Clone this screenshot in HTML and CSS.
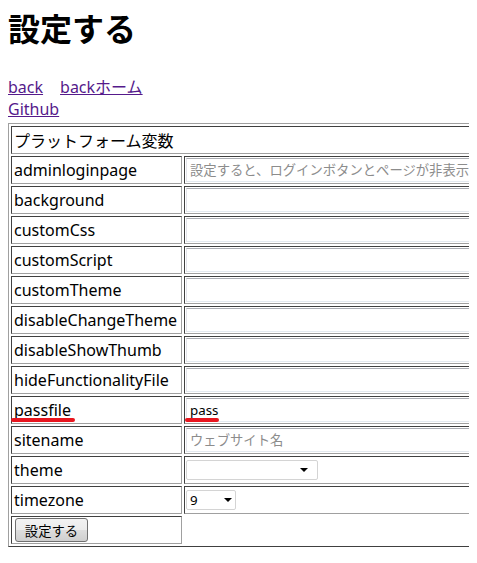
FILE: index.html
```html
<!DOCTYPE html>
<html lang="ja">
<head>
<meta charset="utf-8">
<title>設定する</title>
<link rel="stylesheet" href="styles.css">
</head>
<body>
<h1 class="title">設定する</h1>
<div class="nav">
  <div class="nav-row"><a class="link" href="#">back</a><a class="link link-home" href="#">backホーム</a></div>
  <div class="nav-row"><a class="link" href="#">Github</a></div>
</div>
<div class="table-clip">
  <div class="settings">
    <div class="cell head">プラットフォーム変数</div>
    <div class="cell key">adminloginpage</div><div class="cell val"><input class="field" placeholder="設定すると、ログインボタンとページが非表示になります"></div>
    <div class="cell key">background</div><div class="cell val"><input class="field"></div>
    <div class="cell key">customCss</div><div class="cell val"><input class="field"></div>
    <div class="cell key">customScript</div><div class="cell val"><input class="field"></div>
    <div class="cell key">customTheme</div><div class="cell val"><input class="field"></div>
    <div class="cell key">disableChangeTheme</div><div class="cell val"><input class="field"></div>
    <div class="cell key">disableShowThumb</div><div class="cell val"><input class="field"></div>
    <div class="cell key">hideFunctionalityFile</div><div class="cell val"><input class="field"></div>
    <div class="cell key marked">passfile<span class="mark mark-key"></span></div><div class="cell val marked"><input class="field" value="pass"><span class="mark mark-val"></span></div>
    <div class="cell key">sitename</div><div class="cell val"><input class="field" placeholder="ウェブサイト名"></div>
    <div class="cell key">theme</div><div class="cell val"><span class="select-wrap theme-wrap"><select class="select theme-select"><option></option></select></span></div>
    <div class="cell key">timezone</div><div class="cell val"><span class="select-wrap tz-wrap"><select class="select tz-select"><option>9</option></select></span></div>
    <div class="cell key"><button class="btn" type="button">設定する</button></div>
  </div>
</div>
</body>
</html>
```

FILE: styles.css
```css
body {
  margin: 8px;
  font-family: "Noto Sans", "Noto Sans CJK JP", sans-serif;
  font-size: 16px;
  color: #000;
  background: #fff;
}
.title {
  margin: 0;
  font-family: "Noto Sans CJK JP", sans-serif;
  font-size: 32px;
  font-weight: bold;
  line-height: 38px;
}
.nav {
  margin-top: 30px;
}
.nav-row {
  line-height: 22px;
  height: 22px;
}
.link {
  color: #551a8b;
  text-decoration: underline;
}
.link-home {
  margin-left: 17px;
}
.table-clip {
  margin-top: 3px;
  margin-right: -8px;
  overflow: hidden;
}
.settings {
  display: grid;
  grid-template-columns: 171px 480px;
  grid-auto-rows: 28px;
  gap: 2px;
  padding: 2px;
  width: max-content;
  border-style: solid;
  border-width: 1px;
  border-color: #a0a0a0 #404040 #404040 #a0a0a0;
}
.cell {
  box-sizing: border-box;
  display: flex;
  align-items: center;
  height: 28px;
  border-style: solid;
  border-width: 1px;
  border-color: #404040 #a0a0a0 #a0a0a0 #404040;
  padding: 1px;
  line-height: 24px;
  white-space: nowrap;
}
.head {
  grid-column: 1 / 3;
  font-family: "Noto Sans CJK JP", sans-serif;
  padding-left: 2px;
}
.key {
  grid-column: 1;
  padding-left: 2px;
}
.val {
  grid-column: 2;
}
.marked {
  position: relative;
}
.field {
  box-sizing: border-box;
  display: block;
  flex: none;
  width: 470px;
  height: 24px;
  margin: 0;
  padding: 0 3px;
  border: 1px solid;
  border-color: #abadb3 #dbdfe6 #e3e9ef #e2e3ea;
  font-family: "Noto Sans", "Noto Sans CJK JP", sans-serif;
  font-size: 13.33px;
  color: #000;
  background: #fff;
  outline: none;
}
.field::placeholder {
  color: #8c8c8c;
  font-family: "Noto Sans CJK JP", sans-serif;
}
.mark {
  position: absolute;
  height: 4px;
  border-radius: 2px;
  background: #e8161f;
  top: 21px;
}
.mark-key {
  left: -1px;
  width: 64px;
}
.mark-val {
  left: 0;
  width: 34px;
}
.select-wrap {
  position: relative;
  display: block;
}
.select-wrap::after {
  content: "";
  position: absolute;
  top: 8px;
  border-left: 4px solid transparent;
  border-right: 4px solid transparent;
  border-top: 4px solid #000;
  pointer-events: none;
}
.theme-wrap::after {
  right: 10px;
}
.tz-wrap::after {
  right: 4px;
}
.select {
  appearance: none;
  -webkit-appearance: none;
  box-sizing: border-box;
  display: block;
  height: 20px;
  margin: 0;
  padding: 0 3px;
  border: 1px solid #d4d4d4;
  border-radius: 2px;
  background: #fff;
  font-family: "Noto Sans", sans-serif;
  font-size: 13.33px;
  line-height: 18px;
  color: #000;
}
.theme-select {
  width: 132px;
}
.tz-select {
  width: 50px;
}
.btn {
  box-sizing: border-box;
  display: block;
  width: 73px;
  height: 24px;
  margin: 0 0 0 1px;
  padding: 0;
  border: 1px solid #707070;
  border-radius: 3px;
  background: linear-gradient(#f2f2f2, #ebebeb 50%, #dddddd 51%, #cfcfcf);
  font-family: "Noto Sans CJK JP", sans-serif;
  font-size: 13.33px;
  color: #000;
}
```
